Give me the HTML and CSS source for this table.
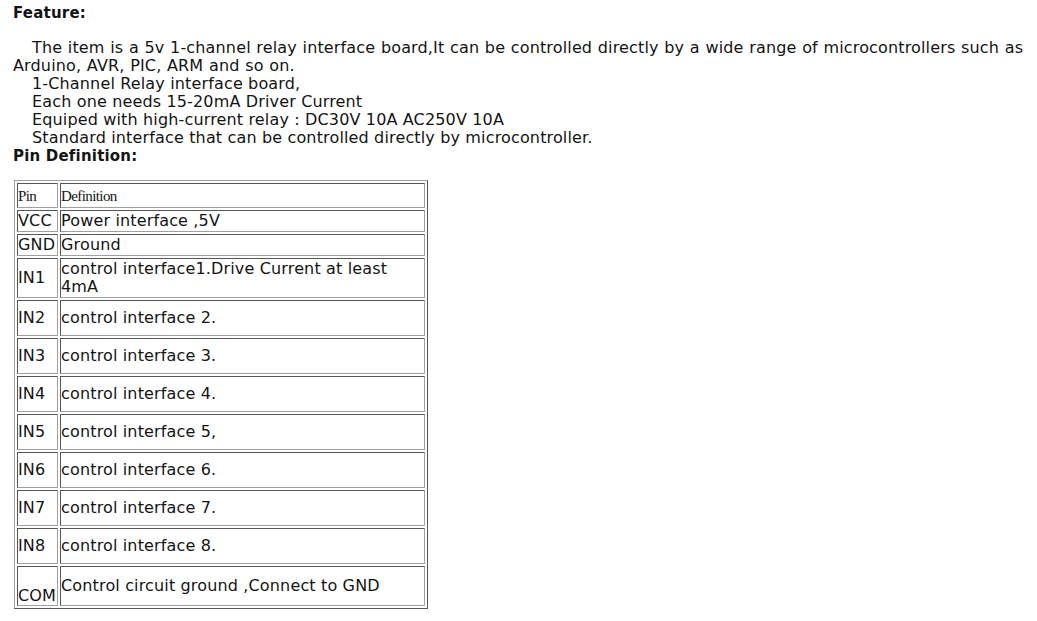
FILE: index.html
```html
<!DOCTYPE html>
<html>
<head>
<meta charset="utf-8">
<link rel="stylesheet" href="styles.css">
</head>
<body>
<div class="page">
  <div class="heading">Feature:</div>
  <div class="feature">
    <p class="intro">The item is a 5v 1-channel relay interface board,It can be controlled directly by a wide range of microcontrollers such as Arduino, AVR, PIC, ARM and so on.</p>
    <p class="item">1-Channel Relay interface board,</p>
    <p class="item">Each one needs 15-20mA Driver Current</p>
    <p class="item">Equiped with high-current relay : DC30V 10A AC250V 10A</p>
    <p class="item">Standard interface that can be controlled directly by microcontroller.</p>
  </div>
  <div class="heading">Pin Definition:</div>
  <table class="pins">
    <tr class="head"><td class="pin">Pin</td><td class="def">Definition</td></tr>
    <tr class="short"><td class="pin">VCC</td><td class="def">Power interface ,5V</td></tr>
    <tr class="short"><td class="pin">GND</td><td class="def">Ground</td></tr>
    <tr class="two"><td class="pin">IN1</td><td class="def">control interface1.Drive Current at least 4mA</td></tr>
    <tr class="tall"><td class="pin">IN2</td><td class="def">control interface 2.</td></tr>
    <tr class="tall"><td class="pin">IN3</td><td class="def">control interface 3.</td></tr>
    <tr class="tall"><td class="pin">IN4</td><td class="def">control interface 4.</td></tr>
    <tr class="tall"><td class="pin">IN5</td><td class="def">control interface 5,</td></tr>
    <tr class="tall"><td class="pin">IN6</td><td class="def">control interface 6.</td></tr>
    <tr class="tall"><td class="pin">IN7</td><td class="def">control interface 7.</td></tr>
    <tr class="tall"><td class="pin">IN8</td><td class="def">control interface 8.</td></tr>
    <tr class="com"><td class="pin bottom">COM</td><td class="def">Control circuit ground ,Connect to GND</td></tr>
  </table>
</div>
</body>
</html>
```

FILE: styles.css
```css
html, body {
  margin: 0;
  padding: 0;
  background: #ffffff;
}
.page {
  padding: 4px 0 0 13px;
  font-family: "DejaVu Sans", Verdana, sans-serif;
  font-size: 16px;
  letter-spacing: 0.15px;
  line-height: 18px;
  color: #141414;
}
.heading {
  font-weight: bold;
  font-size: 15px;
  letter-spacing: 0.2px;
  line-height: 18px;
}
.feature {
  margin-top: 17px;
  width: 1018px;
}
.feature p {
  margin: 0;
}
.intro {
  text-indent: 19px;
  word-spacing: 0.4px;
}
.item {
  padding-left: 19px;
}
.pins {
  margin-top: 15px;
  margin-left: 1px;
  border-collapse: separate;
  border-spacing: 2px;
  border: 1px solid #a0a0a0;
  border-right-color: #555555;
  border-bottom-color: #555555;
  width: 414px;
}
.pins td {
  border: 1px solid #555555;
  border-right-color: #a0a0a0;
  border-bottom-color: #a0a0a0;
  padding: 0 1px 0 0;
  vertical-align: middle;
}
.pins .pin {
  width: 38px;
}
.pins .head td {
  font-family: "Liberation Serif", "Times New Roman", serif;
  font-size: 15px;
  letter-spacing: -0.6px;
  height: 23px;
}
.pins .short td {
  height: 20px;
}
.pins .two td {
  height: 38px;
}
.pins .tall td {
  height: 34px;
}
.pins .com td {
  height: 38px;
}
.pins .bottom {
  vertical-align: bottom;
}
```
